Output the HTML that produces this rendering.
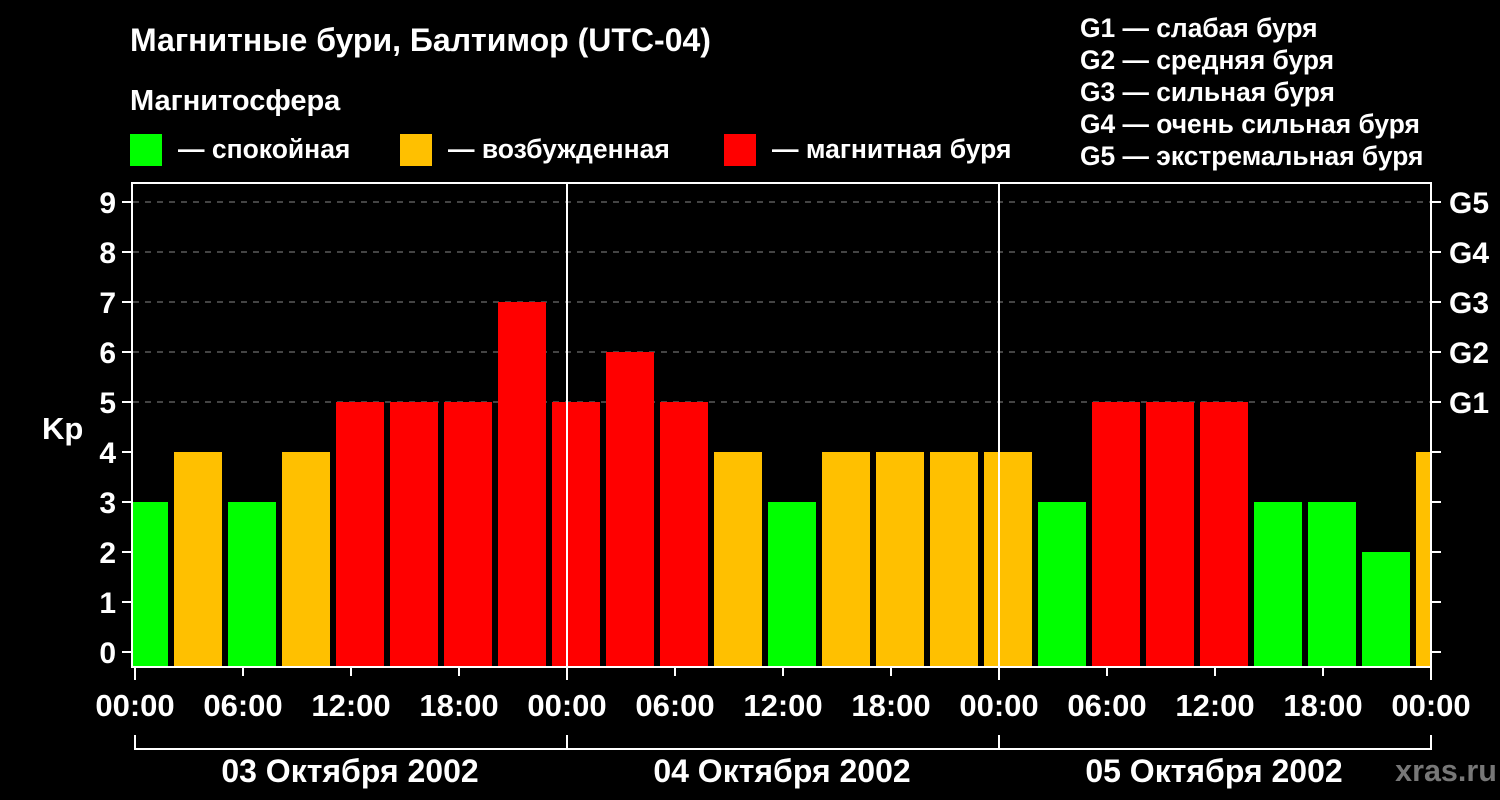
<!DOCTYPE html>
<html><head><meta charset="utf-8"><style>
html,body{margin:0;padding:0;background:#000;}
svg{display:block;font-family:"Liberation Sans",Arial,sans-serif;font-weight:bold;}
</style></head><body>
<svg width="1500" height="800" viewBox="0 0 1500 800" xmlns="http://www.w3.org/2000/svg">
<rect width="1500" height="800" fill="#000"/>
<g fill="#fff" font-size="26">
<text x="130" y="51" font-size="32">Магнитные бури, Балтимор (UTC-04)</text>
<text x="130" y="110" font-size="29">Магнитосфера</text>
<text x="178" y="158" font-size="26.5">— спокойная</text>
<text x="448" y="158" font-size="26.5">— возбужденная</text>
<text x="772" y="158" font-size="26.5">— магнитная буря</text>
<text x="1080" y="37" font-size="26.4">G1 — слабая буря</text>
<text x="1080" y="69" font-size="26.4">G2 — средняя буря</text>
<text x="1080" y="101" font-size="26.4">G3 — сильная буря</text>
<text x="1080" y="133" font-size="26.4">G4 — очень сильная буря</text>
<text x="1080" y="165" font-size="26.4">G5 — экстремальная буря</text>
</g>
<rect x="130" y="134" width="32" height="32" fill="#00ff00"/>
<rect x="400" y="134" width="32" height="32" fill="#ffc000"/>
<rect x="724" y="134" width="32" height="32" fill="#ff0000"/>
<defs><clipPath id="c"><rect x="133" y="183" width="1297" height="484"/></clipPath></defs>
<g stroke="#888" stroke-width="1" stroke-dasharray="6,6">
<line x1="133" y1="202" x2="1430" y2="202"/><line x1="133" y1="252" x2="1430" y2="252"/><line x1="133" y1="302" x2="1430" y2="302"/><line x1="133" y1="352" x2="1430" y2="352"/><line x1="133" y1="402" x2="1430" y2="402"/>
</g>
<g id="bars" clip-path="url(#c)"></g>
<rect x="132" y="183" width="1299" height="484" fill="none" stroke="#fff" stroke-width="2"/>
<line x1="567" y1="182" x2="567" y2="668" stroke="#fff" stroke-width="2"/>
<line x1="999" y1="182" x2="999" y2="668" stroke="#fff" stroke-width="2"/>
<g id="ax" stroke="#fff" stroke-width="2"></g>
<g id="lab" fill="#fff" font-size="30"></g>
<text x="42" y="439" fill="#fff" font-size="31">Kp</text>
<g fill="#fff" font-size="32" text-anchor="middle">
<text x="350" y="782">03 Октября 2002</text>
<text x="782" y="782">04 Октября 2002</text>
<text x="1214" y="782">05 Октября 2002</text>
</g>
<text x="1446" y="781" fill="#777" font-size="30.5" text-anchor="middle">xras.ru</text>
<path d="M135 735V749H1431V735M567 735V749M999 735V749" stroke="#fff" stroke-width="2" fill="none"/>
</svg>
<script>
var v=[3,4,3,4,5,5,5,7,5,6,5,4,3,4,4,4,4,3,5,5,5,3,3,2,4];
var ns="http://www.w3.org/2000/svg",b=document.getElementById("bars"),ax=document.getElementById("ax"),lab=document.getElementById("lab");
function el(p,t,a,txt){var e=document.createElementNS(ns,t);for(var k in a)e.setAttribute(k,a[k]);if(txt)e.textContent=txt;p.appendChild(e);}
v.forEach(function(k,i){var c=k<4?"#00ff00":(k==4?"#ffc000":"#ff0000");var cx=144+54*i;el(b,"rect",{x:cx-24,y:652-50*k,width:48,height:50*k+20,fill:c});});
for(var k=0;k<=9;k++){var y=652-50*k;el(ax,"line",{x1:122,y1:y,x2:132,y2:y});el(ax,"line",{x1:1431,y1:y,x2:1441,y2:y});el(lab,"text",{x:116,y:y+11,"text-anchor":"end"},""+k);}
["G1","G2","G3","G4","G5"].forEach(function(g,i){el(lab,"text",{x:1449,y:413-50*i},g);});
var hl=["00:00","06:00","12:00","18:00"];
for(var i=0;i<=12;i++){var x=135+108*i;el(ax,"line",{x1:x,y1:668,x2:x,y2:(i%4==0?680:676)});el(lab,"text",{x:x,y:716,"text-anchor":"middle","font-size":"31"},hl[i%4]);}
</script>
</body></html>
